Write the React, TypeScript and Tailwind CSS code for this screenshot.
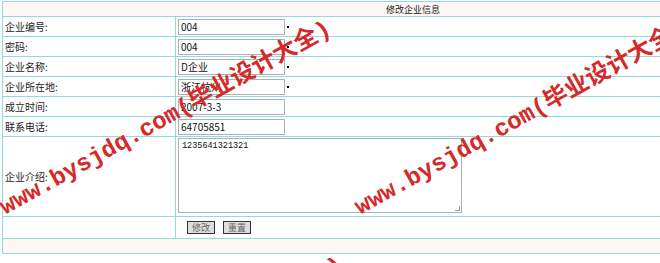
import React from "react"

const line = "border-[#8fdcdc]"

const fields = [
    { label: "企业编号:", value: "004", mark: true },
    { label: "密码:", value: "004", mark: true },
    { label: "企业名称:", value: "D企业", mark: true },
    { label: "企业所在地:", value: "浙江杭州", mark: true },
    { label: "成立时间:", value: "2007-3-3", mark: false },
    { label: "联系电话:", value: "64705851", mark: false },
]

function Watermark({ className }: { className: string }) {
    return (
        <div
            className={`pointer-events-none absolute origin-bottom-left -rotate-[29deg] whitespace-nowrap text-[24px] font-bold leading-none text-[#d42a2a] ${className}`}
            style={{ fontFamily: '"Liberation Mono", "Noto Sans CJK SC", monospace' }}
        >
            www.bysjdq.com(毕业设计大全)
        </div>
    )
}

export default function App() {
    return (
        <div
            className="relative h-[263px] w-[660px] overflow-hidden bg-white pl-[2px] pt-[1px] text-[10px] text-[#222]"
            style={{ fontFamily: '"Noto Sans CJK SC", "Liberation Sans", sans-serif' }}
        >
            <div className={`w-[822px] border-l border-t ${line}`}>
                {/* title */}
                <div className={`flex h-[15px] items-center justify-center border-b border-r ${line} bg-[#fcf7f5] text-[9px] leading-none`}>
                    修改企业信息
                </div>

                {fields.map((f) => (
                    <div key={f.label} className={`flex h-[20px] border-b border-r ${line}`}>
                        <div className={`flex w-[173px] items-center border-r ${line} pl-[2px] leading-none`}>
                            {f.label}
                        </div>
                        <div className="flex flex-1 items-center pl-[2px]">
                            <div className="flex h-[16px] w-[107px] items-center border border-[#a9b0b6] bg-white pl-[2px] text-[10px] leading-none text-[#111]">
                                {f.value}
                            </div>
                            {f.mark && <span className="ml-[2px] h-[2px] w-[2px] bg-black" />}
                        </div>
                    </div>
                ))}

                {/* intro */}
                <div className={`flex h-[80px] border-b border-r ${line}`}>
                    <div className={`flex w-[173px] items-center border-r ${line} pl-[2px] leading-none`}>
                        企业介绍:
                    </div>
                    <div className="flex flex-1 items-start pl-[2px] pt-[1px]">
                        <div className="relative h-[75px] w-[284px] border border-[#a9b0b6] bg-white px-[3px] pt-[3px] text-[8.5px] leading-none text-[#111]" style={{ fontFamily: '"Liberation Mono", monospace' }}>
                            1235641321321
                            <span className="absolute bottom-[1px] right-[1px] h-[5px] w-[5px] border-b border-r border-[#999]" />
                        </div>
                    </div>
                </div>

                {/* buttons */}
                <div className={`flex h-[22px] border-b border-r ${line}`}>
                    <div className={`w-[173px] border-r ${line}`} />
                    <div className="flex flex-1 items-center gap-[8px] pl-[11px]">
                        <button className="flex h-[13px] w-[28px] items-center justify-center border border-[#333] bg-[#dedede] text-[9px] leading-none text-[#666]">
                            修改
                        </button>
                        <button className="flex h-[13px] w-[28px] items-center justify-center border border-[#333] bg-[#dedede] text-[9px] leading-none text-[#666]">
                            重置
                        </button>
                    </div>
                </div>

                {/* footer */}
                <div className={`h-[15px] border-b border-r ${line} bg-[#fcf7f5]`} />
            </div>

            <Watermark className="left-[8px] top-[196px]" />
            <Watermark className="left-[363px] top-[196px]" />
            <Watermark className="left-[20px] top-[432px]" />
        </div>
    )
}
